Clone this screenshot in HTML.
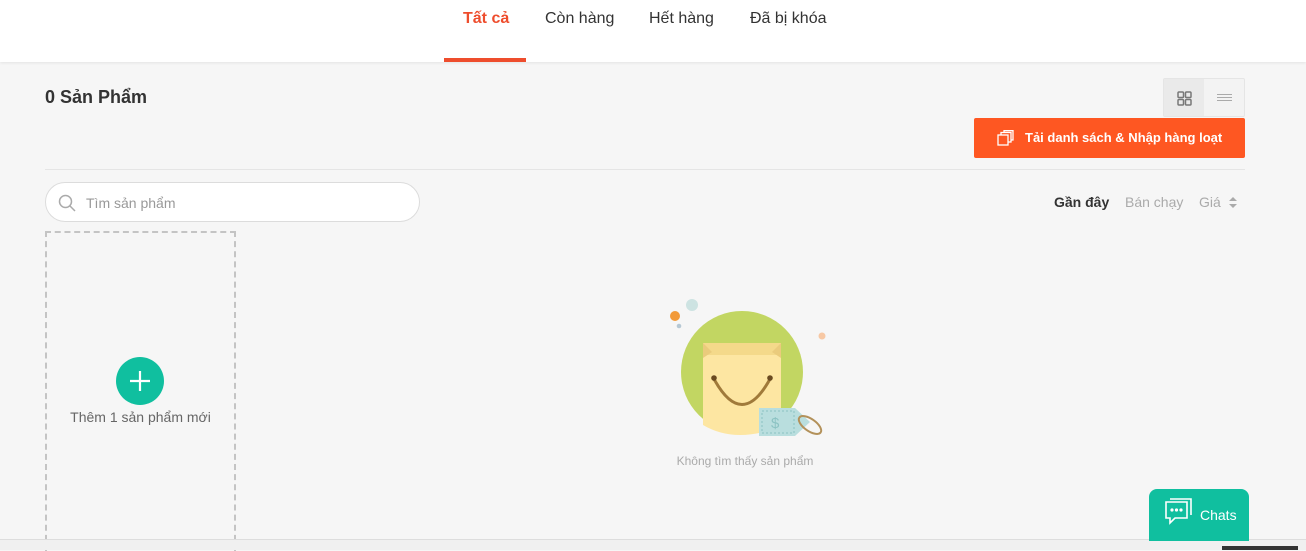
<!DOCTYPE html>
<html><head><meta charset="utf-8"><style>
*{box-sizing:border-box;margin:0;padding:0}
body{width:1306px;height:550px;overflow:hidden;background:#f6f6f6;font-family:"Liberation Sans",Arial,sans-serif;position:relative}
.top{position:absolute;left:0;top:0;width:1306px;height:62px;background:#fff;box-shadow:0 1px 3px rgba(0,0,0,.08)}
.tab{position:absolute;top:10px;font-size:16px;color:#333}
.abs{position:absolute}
</style></head><body>
<div class="top">
<div class="tab" style="left:463px;color:#ee4d2d;font-weight:bold">Tất cả</div>
<div class="tab" style="left:545px">Còn hàng</div>
<div class="tab" style="left:649px">Hết hàng</div>
<div class="tab" style="left:750px">Đã bị khóa</div>
<div class="abs" style="left:444px;top:58px;width:82px;height:4px;background:#ee4d2d"></div>
</div>
<div class="abs" style="left:45px;top:87px;font-size:18px;font-weight:bold;color:#333">0 Sản Phẩm</div>
<div class="abs" style="left:1163px;top:78px;width:82px;height:39px;border:1px solid #e5e5e5;background:#f3f3f3;border-radius:2px">
<div class="abs" style="left:0;top:0;width:40px;height:37px;background:#eaeaea"></div>
<svg class="abs" style="left:13px;top:12px" width="15" height="15" viewBox="0 0 15 15" fill="none" stroke="#777" stroke-width="1.5"><rect x="1" y="1" width="5.5" height="5.5" rx="1"/><rect x="8.5" y="1" width="5.5" height="5.5" rx="1"/><rect x="1" y="8.5" width="5.5" height="5.5" rx="1"/><rect x="8.5" y="8.5" width="5.5" height="5.5" rx="1"/></svg>
<svg class="abs" style="left:53px;top:14px" width="15" height="10" stroke="#aaa" stroke-width="1"><path d="M0 1.5H15M0 4.5H15M0 7.5H15"/></svg>
</div>
<div class="abs" style="left:974px;top:118px;width:271px;height:40px;background:#fe5722;border-radius:2px;color:#fff;font-size:13px;font-weight:bold;line-height:40px;padding-left:51px">Tải danh sách &amp; Nhập hàng loạt
<svg class="abs" style="left:23px;top:12px" width="17" height="16" fill="none" stroke="#fff" stroke-width="1.3"><rect x="1" y="5" width="10" height="10"/><path d="M4 5V2.5H14V12H11M7 2.5V0.7H16V10H14"/></svg>
</div>
<div class="abs" style="left:45px;top:169px;width:1200px;height:1px;background:#e5e5e5"></div>
<div class="abs" style="left:45px;top:182px;width:375px;height:40px;border:1px solid #dcdcdc;border-radius:20px;background:#fff">
<svg class="abs" style="left:12px;top:11px" width="18" height="18" fill="none" stroke="#aaa" stroke-width="1.5"><circle cx="7.5" cy="7.5" r="6"/><path d="M12 12L17 17"/></svg>
<div class="abs" style="left:40px;top:12px;font-size:14px;color:#999">Tìm sản phẩm</div>
</div>
<div class="abs" style="left:1054px;top:194px;font-size:14px;font-weight:bold;color:#333">Gần đây</div>
<div class="abs" style="left:1125px;top:194px;font-size:14px;color:#aaa">Bán chạy</div>
<div class="abs" style="left:1199px;top:194px;font-size:14px;color:#aaa">Giá</div>
<svg class="abs" style="left:1229px;top:197px" width="8" height="11" fill="#aaa"><path d="M4 0L8 4H0zM4 11L0 7H8z"/></svg>
<div class="abs" style="left:45px;top:231px;width:191px;height:320px;border:2px dashed #c4c4c4;border-bottom:none"></div>
<div class="abs" style="left:116px;top:357px;width:48px;height:48px;border-radius:50%;background:#10bf9f"></div>
<svg class="abs" style="left:128px;top:369px" width="24" height="24" stroke="#fff" stroke-width="2.2"><path d="M12 2V22M2 12H22"/></svg>
<div class="abs" style="left:46px;top:409px;width:189px;text-align:center;font-size:14px;color:#666">Thêm 1 sản phẩm mới</div>
<svg class="abs" style="left:660px;top:295px" width="170" height="150">
<circle cx="15" cy="21" r="5" fill="#f29a38"/><circle cx="32" cy="10" r="6" fill="#cde3e2"/><circle cx="19" cy="31" r="2.3" fill="#b6c8d4"/><circle cx="162" cy="41" r="3.5" fill="#f7c8a4"/>
<circle cx="82" cy="77" r="61" fill="#c2d662"/>
<path d="M43 48H121V131Q100 140 80 140Q60 140 43 130Z" fill="#fde6a2"/>
<path d="M43 48H121V60H43Z" fill="#f4d98a"/><path d="M43 48L52 57L43 63ZM121 48L112 57L121 63Z" fill="#eacb7c"/>
<path d="M54 84Q82 135 110 84" fill="none" stroke="#a07a3a" stroke-width="3"/>
<circle cx="54" cy="83" r="2.8" fill="#6a4a20"/><circle cx="110" cy="83" r="2.8" fill="#6a4a20"/>
<path d="M99 113H135L150 127L135 141H99Z" fill="#b9dede"/>
<rect x="102" y="116" width="32" height="22" fill="none" stroke="#8cc3c3" stroke-dasharray="2 2"/>
<text x="111" y="133" font-size="15" fill="#8cc3c3" font-family="Liberation Sans">$</text>
<ellipse cx="150" cy="130" rx="13" ry="6" transform="rotate(35 150 130)" fill="none" stroke="#b3915a" stroke-width="2"/>
</svg>
<div class="abs" style="left:660px;top:454px;width:170px;text-align:center;font-size:12px;color:#aaa">Không tìm thấy sản phẩm</div>
<div class="abs" style="left:0;top:539px;width:1306px;height:11px;background:#f0f0f0;border-top:1px solid #ddd"></div>
<div class="abs" style="left:1222px;top:546px;width:76px;height:4px;background:#333"></div>
<div class="abs" style="left:1149px;top:489px;width:100px;height:52px;background:#10bf9f;border-radius:8px 8px 0 0">
<svg class="abs" style="left:15px;top:9px" width="30" height="30" fill="none" stroke="#fff" stroke-width="1.6"><path d="M2 4H23V20H11L6 25V20H2Z"/><path d="M6 1H27V17"/><circle cx="8" cy="12" r=".8" fill="#fff"/><circle cx="12.5" cy="12" r=".8" fill="#fff"/><circle cx="17" cy="12" r=".8" fill="#fff"/></svg>
<div class="abs" style="left:51px;top:18px;font-size:14px;color:#fff">Chats</div>
</div>
</body></html>
